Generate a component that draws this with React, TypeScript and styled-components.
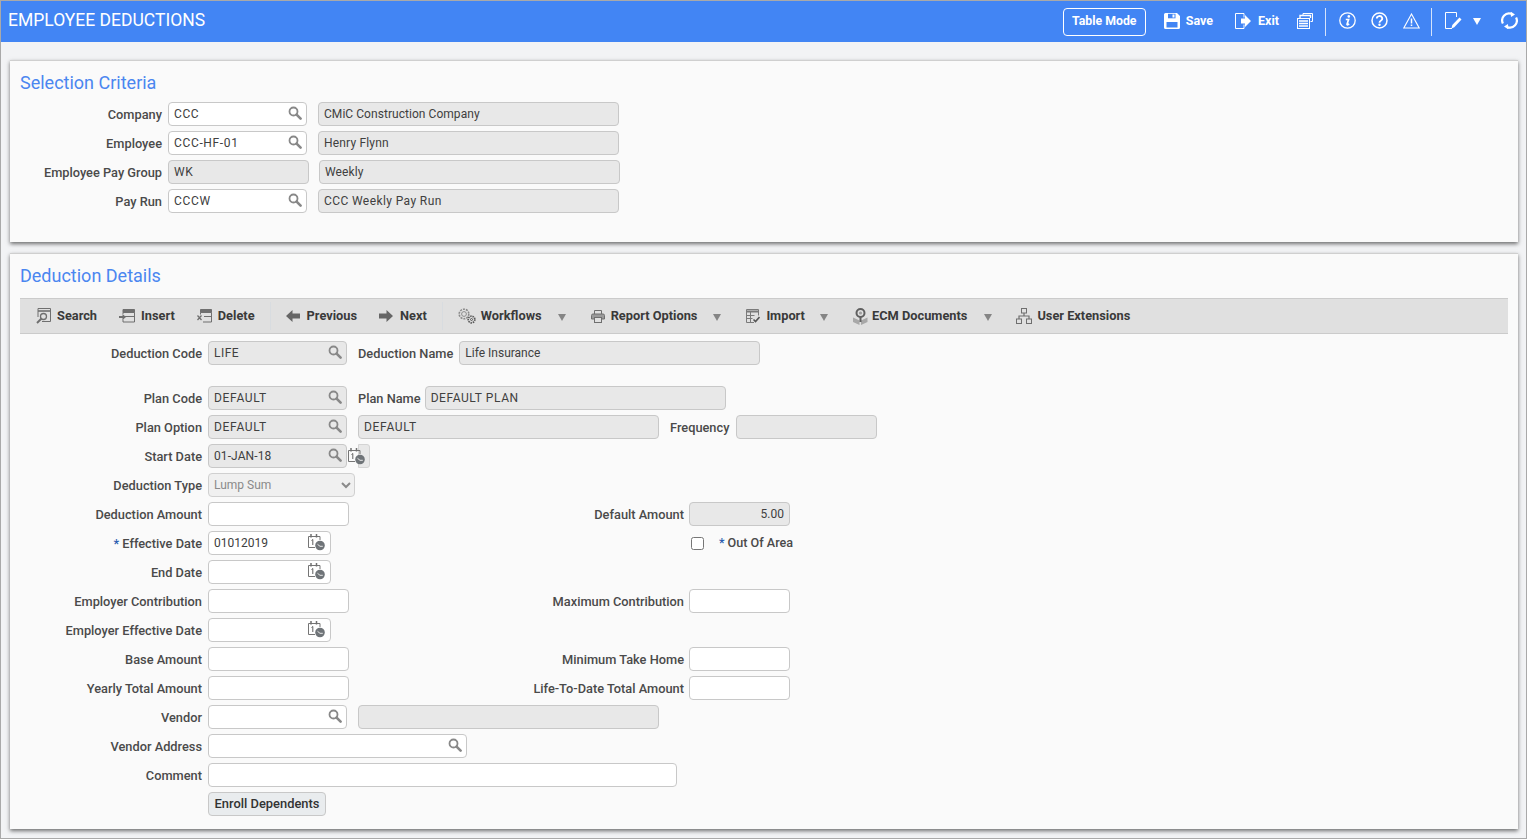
import React from "react";
import styled, { createGlobalStyle } from "styled-components";

const Global = createGlobalStyle`
  html, body { margin: 0; padding: 0; }
  body { font-family: Roboto, "Liberation Sans", Arial, sans-serif; font-size: 12px; color: #444; }
`;

const Page = styled.div`
  box-sizing: border-box;
  width: 1527px;
  height: 839px;
  overflow: hidden;
  border: 1px solid #a9a9a9;
  background: #f2f3f5;
  display: flex;
  flex-direction: column;
`;

const Header = styled.header`
  flex: 0 0 41px;
  background: #4285f4;
  color: #fff;
  display: flex;
  align-items: center;
  padding: 0 8px 0 7px;
`;

const AppTitle = styled.h1`
  margin: 0 0 3px;
  font-size: 17.5px;
  font-weight: 400;
  flex: 1;
`;

const HeaderActions = styled.div`
  display: flex;
  align-items: center;
  height: 100%;
`;

const ModeButton = styled.button`
  box-sizing: border-box;
  width: 83px;
  height: 28px;
  padding: 0 0 2px;
  background: transparent;
  color: #fff;
  border: 1px solid #fff;
  border-radius: 4px;
  font: 700 12.3px Roboto, sans-serif;
`;

const HeaderAction = styled.div<{ $ml?: number }>`
  display: flex;
  align-items: center;
  gap: 6px;
  margin: 0 0 2px ${(p) => p.$ml ?? 0}px;
  font-weight: 700;
  font-size: 12.5px;
  svg { display: block; }
`;

const HeaderDivider = styled.div<{ $ml: number }>`
  width: 1px;
  height: 28px;
  background: #d5e3fb;
  margin-left: ${(p) => p.$ml}px;
`;

const Content = styled.main`
  flex: 1;
  padding: 18px 8px 0 9px;
  display: flex;
  flex-direction: column;
  gap: 11px;
`;

const Panel = styled.section<{ $h: number }>`
  box-sizing: border-box;
  height: ${(p) => p.$h}px;
  background: #fafafa;
  border-top: 1px solid #cfcfcf;
  box-shadow: 0 2px 4px rgba(0, 0, 0, 0.55);
  padding: 11px 10px 0;
`;

const PanelTitle = styled.h2`
  margin: 0 0 8px;
  height: 22px;
  line-height: 22px;
  font-size: 18px;
  font-weight: 400;
  color: #4a86f0;
`;

const Toolbar = styled.div`
  box-sizing: border-box;
  height: 36px;
  margin: 11px 0 7px;
  padding-left: 16px;
  background: #e0e0e0;
  border-top: 1px solid #cbcbcb;
  border-bottom: 1px solid #cbcbcb;
  display: flex;
  align-items: center;
`;

const ToolItem = styled.div<{ $ml?: number; $gap?: number }>`
  display: flex;
  align-items: center;
  gap: ${(p) => p.$gap ?? 6}px;
  margin-left: ${(p) => p.$ml ?? 0}px;
  font-weight: 700;
  font-size: 12.8px;
  color: #3a3a3a;
  white-space: nowrap;
  svg { display: block; flex: none; }
`;

const ToolText = styled.span`
  margin-bottom: 2px;
`;

const ToolSeparator = styled.div<{ $ml: number }>`
  width: 1px;
  height: 28px;
  background: #d8dce0;
  margin-left: ${(p) => p.$ml}px;
`;

const Caret = styled.span<{ $ml: number }>`
  width: 0;
  height: 0;
  margin: 2px 0 0 ${(p) => p.$ml}px;
  border-left: 4.5px solid transparent;
  border-right: 4.5px solid transparent;
  border-top: 7px solid #858585;
`;

const Rows = styled.div`
  display: flex;
  flex-direction: column;
  gap: 5px;
`;

const Row = styled.div<{ $mt?: number }>`
  display: flex;
  align-items: center;
  height: 24px;
  margin-top: ${(p) => p.$mt ?? 0}px;
`;

const SplitRow = styled.div`
  display: grid;
  grid-template-columns: 188px 141px 340px 101px;
  align-items: center;
  height: 24px;
`;

const Label = styled.label<{ $w?: number; $ml?: number; $mr?: number }>`
  box-sizing: border-box;
  ${(p) => (p.$w ? `width: ${p.$w}px;` : "")}
  margin-left: ${(p) => p.$ml ?? 0}px;
  padding-right: ${(p) => p.$mr ?? 6}px;
  flex: none;
  text-align: right;
  font-size: 12.8px;
  font-weight: 500;
  color: #4a4a4a;
  white-space: nowrap;
`;

const Required = styled.span`
  color: #2a5db0;
  margin-right: 3px;
`;

const Field = styled.div<{ $w: number; $ml?: number; $ro?: boolean }>`
  box-sizing: border-box;
  width: ${(p) => p.$w}px;
  height: 24px;
  flex: none;
  margin-left: ${(p) => p.$ml ?? 0}px;
  padding: 0 4px 0 5px;
  display: flex;
  align-items: center;
  justify-content: space-between;
  background: ${(p) => (p.$ro ? "#e8e8e8" : "#fff")};
  border: 1px solid #c8c8c8;
  border-radius: 4px;
  color: #404040;
  font-size: 12px;
  white-space: nowrap;
  svg { display: block; flex: none; margin-bottom: 2px; }
`;

const FieldValue = styled.span<{ $right?: boolean; $ls?: number }>`
  flex: 1;
  text-align: ${(p) => (p.$right ? "right" : "left")};
  padding-right: ${(p) => (p.$right ? "1px" : "0")};
  letter-spacing: ${(p) => p.$ls ?? 0}px;
`;

const CalendarStub = styled.div`
  box-sizing: border-box;
  width: 12px;
  height: 24px;
  margin-left: 11px;
  position: relative;
  background: #e8e8e8;
  border: 1px solid #d4d4d4;
  border-radius: 0 3px 3px 0;
  svg { position: absolute; left: -11px; top: 2px; }
`;

const TypeSelect = styled.select`
  box-sizing: border-box;
  width: 147px;
  height: 24px;
  padding: 0 0 0 1px;
  background: #f0f0f0;
  border: 1px solid #d0d0d0;
  border-radius: 4px;
  color: #8a8a8a;
  font: 400 12px Roboto, sans-serif;
  opacity: 1;
`;

const CheckCell = styled.div`
  display: flex;
  align-items: center;
  white-space: nowrap;
`;

const Check = styled.input`
  width: 13px;
  height: 13px;
  margin: 0 15px 0 2px;
`;

const PlainLabel = styled.span`
  font-weight: 500;
  font-size: 12.6px;
  color: #4a4a4a;
  margin-bottom: 2px;
`;

const ActionButton = styled.button`
  box-sizing: border-box;
  width: 118px;
  height: 24px;
  margin-left: 188px;
  padding: 0 0 1px;
  background: #e9ecee;
  border: 1px solid #c8c8c8;
  border-radius: 4px;
  color: #333;
  font: 500 12.9px Roboto, sans-serif;
`;

const Search = () => (
  <svg width="14" height="14" viewBox="0 0 14 14" fill="none" stroke="#888">
    <circle cx="5.5" cy="5.5" r="4" strokeWidth="1.8" />
    <path d="M8.6 8.6L12.6 12.6" strokeWidth="2.6" strokeLinecap="round" />
  </svg>
);

const CalSvg = styled.svg`
  margin-right: 1px;
`;

const CalClock = () => (
  <CalSvg width="17" height="18" viewBox="0 0 17 18" fill="none">
    <path d="M0.5 14.5V3.500H12V7M0.500 14.500H7" stroke="#757575" />
    <path d="M3 1v3.500M8.500 1v3.500" stroke="#707070" strokeWidth="1.500" />
    <path d="M3.500 7.500l1.300-1v5.500" stroke="#606060" />
    <circle cx="12" cy="12.500" r="4.800" fill="#6f7478" />
    <path d="M9.500 11.300l2.500 2h2.800" stroke="#e8e8e8" strokeWidth="1" />
  </CalSvg>
);

const W = "#fff";
const B = "#4285f4";

const SaveIcon = () => (
  <svg width="16" height="16" viewBox="0 0 16 16">
    <path d="M1.500 0h11.500L16 3v11.500a1.500 1.500 0 0 1-1.500 1.500h-13A1.500 1.500 0 0 1 0 14.500v-13A1.500 1.500 0 0 1 1.500 0z" fill={W} />
    <rect x="4" y="0.800" width="7.500" height="4.500" fill={B} />
    <rect x="8.500" y="1.500" width="2" height="3" fill={W} />
    <rect x="2.500" y="9" width="11" height="5.500" fill={B} />
  </svg>
);

const ExitIcon = () => (
  <svg width="17" height="16" viewBox="0 0 17 16" fill="none">
    <path d="M9 4.500V0.500H0.500V15.500H9V11.500" stroke={W} />
    <path d="M6 5.500h4V2l6 6-6 6v-3.500H6z" fill={W} />
  </svg>
);

const ReportsIcon = () => (
  <svg width="16" height="16" viewBox="0 0 16 16" fill="none" stroke={W}>
    <path d="M6 2V0.500h9.500v8h-2" />
    <path d="M3 5V2.500h10.500V5" strokeWidth="1.400" />
    <rect x="0.500" y="5.500" width="12" height="10" fill={B} />
    <path d="M2 8h9M2 10.500h9M2 13h9" strokeWidth="1.300" />
  </svg>
);

const InfoIcon = () => (
  <svg width="17" height="17" viewBox="0 0 17 17" fill="none" stroke={W}>
    <circle cx="8.500" cy="8.500" r="7.700" strokeWidth="1.300" />
    <circle cx="9.800" cy="4.400" r="1.300" fill={W} stroke="none" />
    <path d="M6.800 7.500h2.800L8 12.300q0 1.200 2.200-.400" strokeWidth="1.700" />
  </svg>
);

const HelpIcon = () => (
  <svg width="17" height="17" viewBox="0 0 17 17" fill="none" stroke={W}>
    <circle cx="8.500" cy="8.500" r="7.500" strokeWidth="1.500" />
    <path d="M5.800 6.500a2.700 2.500 0 1 1 4 2.200c-1 .6-1.300 1-1.300 2" strokeWidth="1.800" />
    <circle cx="8.500" cy="12.800" r="1.200" fill={W} stroke="none" />
  </svg>
);

const WarnIcon = () => (
  <svg width="17" height="16" viewBox="0 0 17 16" fill="none" stroke={W}>
    <path d="M8.500 1L16.200 15H0.800z" strokeWidth="1.100" />
    <path d="M8.500 5.500v5" strokeWidth="1.500" />
    <path d="M8.500 11.500v1.500" strokeWidth="1.500" />
  </svg>
);

const EditIcon = () => (
  <svg width="17" height="17" viewBox="0 0 17 17" fill="none" stroke={W}>
    <path d="M11.500 5V0.500H0.500V16.500H7" />
    <path d="M6.500 16.500l.800-3.500L14.500 5.500l2 2-7.200 7.700z" fill={W} stroke="none" />
  </svg>
);

const RefreshIcon = () => (
  <svg width="17" height="17" viewBox="0 0 17 17" fill="none" stroke={W}>
    <path d="M1.900 11.500A7 7 0 0 1 10.500 1.800" strokeWidth="2.200" />
    <path d="M15.100 5.500A7 7 0 0 1 6.500 15.200" strokeWidth="2.200" />
    <path d="M9.500 -0.500l4.500 3-4 2.500z" fill={W} stroke="none" />
    <path d="M7.500 17.500l-4.500-3 4-2.500z" fill={W} stroke="none" />
  </svg>
);

const HeaderCaret = styled.span`
  width: 0;
  height: 0;
  margin-left: 11px;
  border-left: 4.500px solid transparent;
  border-right: 4.500px solid transparent;
  border-top: 7px solid #fff;
`;

const G = "#6f6f6f";

const ToolSearch = () => (
  <svg width="15" height="16" viewBox="0 0 15 16" fill="none" stroke={G}>
    <path d="M2 9V0.500h12.500v13H6" />
    <path d="M2 3h12.500" strokeWidth="1.600" />
    <circle cx="7.500" cy="8.500" r="3" strokeWidth="1.300" />
    <path d="M5.500 10.500L1 15" strokeWidth="1.900" />
  </svg>
);

const ToolInsert = () => (
  <svg width="16" height="14" viewBox="0 0 16 14" fill="none" stroke={G}>
    <path d="M4 0.500h11.500v3H4z" fill={G} />
    <path d="M4 5V3.500M15.500 3.500V13H4v-2.500M6 7.500h9.500" />
    <path d="M0 8h4" strokeWidth="2" />
    <path d="M3.500 5l3.500 3-3.500 3z" fill={G} stroke="none" />
  </svg>
);

const ToolDelete = () => (
  <svg width="15" height="14" viewBox="0 0 15 14" fill="none" stroke={G}>
    <path d="M3.500 0.500h11v3h-11z" fill={G} />
    <path d="M3.500 3.500v2M14.500 3.500V13H6M7 7.500h7.500" />
    <path d="M0.500 6.500l4 4.500M4.500 6.500l-4 4.500" strokeWidth="1.300" />
  </svg>
);

const ArrowLeft = () => (
  <svg width="14" height="12" viewBox="0 0 14 12">
    <path d="M0 6L6.500 0v3.500H14v5H6.500V12z" fill="#666" />
  </svg>
);

const ArrowRight = () => (
  <svg width="14" height="12" viewBox="0 0 14 12">
    <path d="M14 6L7.500 0v3.500H0v5h7.500V12z" fill="#666" />
  </svg>
);

const ToolGears = () => (
  <svg width="18" height="16" viewBox="0 0 18 16" fill="none" stroke="#8a8a8a">
    <circle cx="6" cy="6" r="4.800" strokeDasharray="2 1" strokeWidth="1.600" />
    <circle cx="6" cy="6" r="2.400" />
    <circle cx="13.500" cy="11.500" r="3.300" strokeDasharray="1.500 0.800" strokeWidth="1.700" stroke="#5a5a5a" />
    <circle cx="13.500" cy="11.500" r="1" stroke="#5a5a5a" />
  </svg>
);

const ToolPrinter = () => (
  <svg width="14" height="13" viewBox="0 0 14 13" fill="none" stroke={G}>
    <path d="M3.500 4.500V0.500h7V4.500" />
    <path d="M0.500 5.500a1.500 1.500 0 0 1 1.500-1.500h10a1.500 1.500 0 0 1 1.500 1.500v3.500H0.500z" fill="#9a9a9a" />
    <rect x="3.500" y="7.500" width="7" height="5" fill="#e0e0e0" />
  </svg>
);

const ToolImport = () => (
  <svg width="14" height="14" viewBox="0 0 14 14" fill="none" stroke="#7a7a7a">
    <path d="M8 13.500H0.500V0.500h12v6" />
    <path d="M0.500 2.500h12" strokeWidth="2" />
    <path d="M0.500 6.500h8M0.500 9.500h6M4.500 3v10.500" />
    <path d="M7.500 10.500l2 2 4-4.500" strokeWidth="1.600" stroke="#555" />
  </svg>
);

const ToolEcm = () => (
  <svg width="16" height="17" viewBox="0 0 16 17" fill="none">
    <path d="M1 9.500l6.500 3v4.500L1 14zM15.500 9.500l-6.500 3v4.500l6.500-3z" fill="#a8a8a8" />
    <circle cx="8.500" cy="5" r="4" stroke="#606060" strokeWidth="2" />
    <circle cx="8.500" cy="5" r="1.600" fill="#a0a0a0" />
    <path d="M8.500 9v5" stroke="#606060" strokeWidth="2" />
  </svg>
);

const ToolTree = () => (
  <svg width="16" height="16" viewBox="0 0 16 16" fill="none" stroke={G}>
    <rect x="5.500" y="0.500" width="5" height="4.500" />
    <rect x="0.500" y="11" width="5" height="4.500" />
    <rect x="10.500" y="11" width="5" height="4.500" />
    <path d="M8 5v3M3 11V8h10v3" strokeWidth="1.200" />
  </svg>
);

export default function App() {
  return (
    <>
      <Global />
      <Page>
        <Header>
          <AppTitle>EMPLOYEE DEDUCTIONS</AppTitle>
          <HeaderActions>
            <ModeButton>Table Mode</ModeButton>
            <HeaderAction $ml={18}><SaveIcon />Save</HeaderAction>
            <HeaderAction $ml={22}><ExitIcon />Exit</HeaderAction>
            <HeaderAction $ml={18}><ReportsIcon /></HeaderAction>
            <HeaderDivider $ml={12} />
            <HeaderAction $ml={13}><InfoIcon /></HeaderAction>
            <HeaderAction $ml={15}><HelpIcon /></HeaderAction>
            <HeaderAction $ml={15}><WarnIcon /></HeaderAction>
            <HeaderDivider $ml={11} />
            <HeaderAction $ml={13}><EditIcon /></HeaderAction>
            <HeaderCaret />
            <HeaderAction $ml={20}><RefreshIcon /></HeaderAction>
          </HeaderActions>
        </Header>
        <Content>
          <Panel $h={182}>
            <PanelTitle>Selection Criteria</PanelTitle>
            <Rows>
              <Row>
                <Label $w={148}>Company</Label>
                <Field $w={139}><FieldValue $ls={0.6}>CCC</FieldValue><Search /></Field>
                <Field $w={301} $ml={11} $ro><FieldValue $ls={0.05}>CMiC Construction Company</FieldValue></Field>
              </Row>
              <Row>
                <Label $w={148}>Employee</Label>
                <Field $w={139}><FieldValue $ls={0.65}>CCC-HF-01</FieldValue><Search /></Field>
                <Field $w={301} $ml={11} $ro><FieldValue $ls={0.18}>Henry Flynn</FieldValue></Field>
              </Row>
              <Row>
                <Label $w={148}>Employee Pay Group</Label>
                <Field $w={141} $ro><FieldValue $ls={0.6}>WK</FieldValue></Field>
                <Field $w={301} $ml={10} $ro><FieldValue $ls={0.1}>Weekly</FieldValue></Field>
              </Row>
              <Row>
                <Label $w={148}>Pay Run</Label>
                <Field $w={139}><FieldValue $ls={0.7}>CCCW</FieldValue><Search /></Field>
                <Field $w={301} $ml={11} $ro><FieldValue $ls={0.4}>CCC Weekly Pay Run</FieldValue></Field>
              </Row>
            </Rows>
          </Panel>
          <Panel $h={576}>
            <PanelTitle>Deduction Details</PanelTitle>
            <Toolbar>
              <ToolItem><ToolSearch /><ToolText>Search</ToolText></ToolItem>
              <ToolItem $ml={22}><ToolInsert /><ToolText>Insert</ToolText></ToolItem>
              <ToolItem $ml={22}><ToolDelete /><ToolText>Delete</ToolText></ToolItem>
              <ToolSeparator $ml={15} />
              <ToolItem $ml={15} $gap={7}><ArrowLeft /><ToolText>Previous</ToolText></ToolItem>
              <ToolItem $ml={22} $gap={7}><ArrowRight /><ToolText>Next</ToolText></ToolItem>
              <ToolSeparator $ml={15} />
              <ToolItem $ml={15} $gap={5}><ToolGears /><ToolText>Workflows</ToolText></ToolItem>
              <Caret $ml={16} />
              <ToolItem $ml={25}><ToolPrinter /><ToolText>Report Options</ToolText></ToolItem>
              <Caret $ml={16} />
              <ToolItem $ml={25}><ToolImport /><ToolText>Import</ToolText></ToolItem>
              <Caret $ml={15} />
              <ToolItem $ml={24} $gap={4}><ToolEcm /><ToolText>ECM Documents</ToolText></ToolItem>
              <Caret $ml={17} />
              <ToolItem $ml={24} $gap={5}><ToolTree /><ToolText>User Extensions</ToolText></ToolItem>
            </Toolbar>
            <Rows>
              <Row>
                <Label $w={188}>Deduction Code</Label>
                <Field $w={139} $ro><FieldValue $ls={0.5}>LIFE</FieldValue><Search /></Field>
                <Label $ml={11}>Deduction Name</Label>
                <Field $w={301} $ro><FieldValue>Life Insurance</FieldValue></Field>
              </Row>
              <Row $mt={16}>
                <Label $w={188}>Plan Code</Label>
                <Field $w={139} $ro><FieldValue $ls={0.7}>DEFAULT</FieldValue><Search /></Field>
                <Label $ml={11} $mr={4}>Plan Name</Label>
                <Field $w={301} $ro><FieldValue $ls={0.58}>DEFAULT PLAN</FieldValue></Field>
              </Row>
              <Row>
                <Label $w={188}>Plan Option</Label>
                <Field $w={139} $ro><FieldValue $ls={0.7}>DEFAULT</FieldValue><Search /></Field>
                <Field $w={301} $ml={11} $ro><FieldValue $ls={0.7}>DEFAULT</FieldValue></Field>
                <Label $ml={11} $mr={7}>Frequency</Label>
                <Field $w={141} $ro />
              </Row>
              <Row>
                <Label $w={188}>Start Date</Label>
                <Field $w={139} $ro><FieldValue $ls={0.1}>01-JAN-18</FieldValue><Search /></Field>
                <CalendarStub><CalClock /></CalendarStub>
              </Row>
              <Row>
                <Label $w={188}>Deduction Type</Label>
                <TypeSelect disabled defaultValue="Lump Sum"><option>Lump Sum</option></TypeSelect>
              </Row>
              <SplitRow>
                <Label>Deduction Amount</Label>
                <Field $w={141} />
                <Label $mr={5}>Default Amount</Label>
                <Field $w={101} $ro><FieldValue $right>5.00</FieldValue></Field>
              </SplitRow>
              <SplitRow>
                <Label><Required>*</Required>Effective Date</Label>
                <Field $w={123}><FieldValue>01012019</FieldValue><CalClock /></Field>
                <span />
                <CheckCell><Check type="checkbox" /><PlainLabel><Required>*</Required>Out Of Area</PlainLabel></CheckCell>
              </SplitRow>
              <Row>
                <Label $w={188}>End Date</Label>
                <Field $w={123}><FieldValue /><CalClock /></Field>
              </Row>
              <SplitRow>
                <Label>Employer Contribution</Label>
                <Field $w={141} />
                <Label $mr={5}>Maximum Contribution</Label>
                <Field $w={101} />
              </SplitRow>
              <Row>
                <Label $w={188}>Employer Effective Date</Label>
                <Field $w={123}><FieldValue /><CalClock /></Field>
              </Row>
              <SplitRow>
                <Label>Base Amount</Label>
                <Field $w={141} />
                <Label $mr={5}>Minimum Take Home</Label>
                <Field $w={101} />
              </SplitRow>
              <SplitRow>
                <Label>Yearly Total Amount</Label>
                <Field $w={141} />
                <Label $mr={5}>Life-To-Date Total Amount</Label>
                <Field $w={101} />
              </SplitRow>
              <Row>
                <Label $w={188}>Vendor</Label>
                <Field $w={139}><FieldValue /><Search /></Field>
                <Field $w={301} $ml={11} $ro />
              </Row>
              <Row>
                <Label $w={188}>Vendor Address</Label>
                <Field $w={259}><FieldValue /><Search /></Field>
              </Row>
              <Row>
                <Label $w={188}>Comment</Label>
                <Field $w={469} />
              </Row>
              <Row>
                <ActionButton>Enroll Dependents</ActionButton>
              </Row>
            </Rows>
          </Panel>
        </Content>
      </Page>
    </>
  );
}
